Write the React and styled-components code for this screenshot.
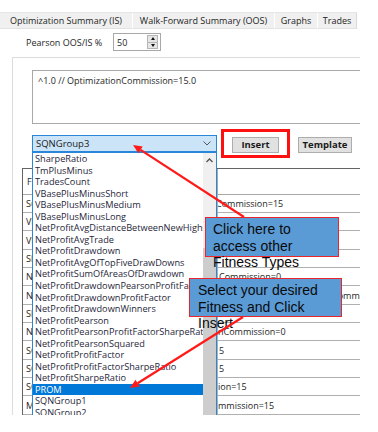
import React from "react";
import styled, { createGlobalStyle } from "styled-components";

const Global = createGlobalStyle`
  html, body { margin: 0; padding: 0; background: #ffffff; }
  body { font-family: "Open Sans", "Noto Sans", sans-serif; }
  * { box-sizing: border-box; }
`;

const Page = styled.div`
  width: 378px;
  height: 432px;
  background: #fff;
`;

const Frame = styled.div`
  position: relative;
  width: 360px;
  height: 415px;
  overflow: hidden;
  background: #fff;
  padding-top: 12px;
  font-size: 9px;
  color: #1a1a1a;
`;

const TabBar = styled.div`
  display: flex;
  height: 17px;
  width: 357px;
  background: #f0f0f0;
  border-top: 1px solid #e6e6e6;
`;

const Tab = styled.div`
  width: ${(p) => p.$w}px;
  height: 100%;
  display: flex;
  align-items: center;
  justify-content: center;
  border-right: 1px solid #ffffff;
  border-bottom: 1px solid #e2e2e2;
  font-size: 9px;
  color: #1e1e1e;
  white-space: nowrap;
  &:last-child { border-right: 1px solid #d9d9d9; }
`;

const PearsonRow = styled.div`
  display: flex;
  align-items: center;
  margin-top: 4px;
  padding-left: 26px;
  height: 18px;
`;

const Label = styled.span`
  width: 87px;
  font-size: 9px;
  color: #1e1e1e;
`;

const SpinBox = styled.div`
  width: 48px;
  height: 18px;
  border: 1px solid #a8a8a8;
  display: flex;
  align-items: center;
  padding: 0 2px 0 3px;
  background: #fff;
`;

const SpinValue = styled.span`
  flex: 1;
  font-size: 9px;
  color: #1e1e1e;
`;

const SpinButtons = styled.div`
  display: flex;
  flex-direction: column;
  width: 11px;
  height: 14px;
`;

const SpinBtn = styled.div`
  flex: 1;
  background: #e6e6e6;
  border: 1px solid #b5b5b5;
  display: flex;
  align-items: center;
  justify-content: center;
  &:first-child { border-bottom: none; }
`;

const Tri = styled.div`
  width: 0;
  height: 0;
  border-left: 2.5px solid transparent;
  border-right: 2.5px solid transparent;
  ${(p) => (p.$up ? "border-bottom: 3px solid #111;" : "border-top: 3px solid #111;")}
`;

const Group = styled.div`
  margin-top: 6px;
  margin-left: 12px;
  border-top: 1px solid #dcdcdc;
  border-left: 1px solid #dcdcdc;
  height: 400px;
`;

const Inner = styled.div`
  padding-left: 19px;
`;

const TextArea = styled.div`
  margin-top: 12px;
  width: 340px;
  height: 54px;
  border: 1px solid #a9a9a9;
  padding: 3px 5px;
  font-size: 9px;
  color: #1e1e1e;
  background: #fff;
`;

const ToolRow = styled.div`
  display: flex;
  align-items: center;
  margin-top: 5px;
  height: 29px;
`;

const ComboWrap = styled.div`
  position: relative;
  width: 185px;
  height: 17px;
`;

const Combo = styled.div`
  width: 100%;
  height: 100%;
  background: #cce4f7;
  border: 1px solid #2a86d8;
  display: flex;
  align-items: center;
  justify-content: space-between;
  padding: 0 5px 0 3px;
  font-size: 9.5px;
  color: #1a1a1a;
`;

const Chevron = styled.svg`
  width: 8px;
  height: 5px;
`;

const DropList = styled.div`
  position: absolute;
  top: 100%;
  left: 0;
  width: 185px;
  height: 270px;
  background: #fff;
  border: 1px solid #2a86d8;
  display: flex;
  z-index: 5;
`;

const Items = styled.div`
  flex: 1;
  overflow: hidden;
`;

const Item = styled.div`
  height: 11.55px;
  line-height: 11.55px;
  padding-left: 2px;
  font-size: 9.2px;
  white-space: nowrap;
  overflow: hidden;
  color: ${(p) => (p.$sel ? "#ffffff" : "#1f1f3a")};
  background: ${(p) => (p.$sel ? "#0078d7" : "transparent")};
`;

const ScrollBar = styled.div`
  width: 13px;
  display: flex;
  flex-direction: column;
  background: #f0f0f0;
`;

const ScrollArrow = styled.div`
  height: 14px;
  display: flex;
  align-items: center;
  justify-content: center;
`;

const ScrollGap = styled.div`
  height: 81px;
`;

const Thumb = styled.div`
  flex: 1;
  background: #cdcdcd;
`;

const Highlight = styled.div`
  margin-left: 4px;
  width: 69px;
  height: 29px;
  border: 3px solid #ff1010;
  display: flex;
  align-items: center;
  justify-content: center;
`;

const Button = styled.div`
  width: ${(p) => p.$w}px;
  height: 16px;
  margin-left: ${(p) => p.$ml || 0}px;
  margin-top: ${(p) => p.$mt || 0}px;
  background: #e1e1e1;
  border: 1px solid #adadad;
  display: flex;
  align-items: center;
  justify-content: center;
  font-size: 9.5px;
  font-weight: 700;
  color: #1a1a1a;
`;

const Table = styled.div`
  margin-top: 10px;
  margin-left: 9px;
  width: 338px;
  border-top: 1px solid #646464;
  border-left: 1px solid #646464;
  display: grid;
  grid-template-columns: 195px 1fr;
`;

const HeadCell = styled.div`
  height: 26px;
  border-bottom: 1px solid #a8a8a8;
  display: flex;
  align-items: center;
  padding-left: 4px;
  font-size: 9px;
  color: #1e1e1e;
  border-right: ${(p) => (p.$first ? "1px solid #a8a8a8" : "none")};
`;

const Cell = styled.div`
  height: ${(p) => p.$h}px;
  border-bottom: 1px solid #b0b0b0;
  display: flex;
  align-items: center;
  padding-left: ${(p) => (p.$first ? 3 : 0)}px;
  font-size: 9px;
  color: #1e1e1e;
  white-space: nowrap;
  overflow: hidden;
  border-right: ${(p) => (p.$first ? "1px solid #b0b0b0" : "none")};
`;

const CellText = styled.span`
  margin-left: ${(p) => p.$indent || 0}px;
`;

const Callout = styled.div`
  position: absolute;
  left: ${(p) => p.$left}px;
  top: ${(p) => p.$top}px;
  width: ${(p) => p.$w}px;
  height: ${(p) => p.$h}px;
  background: #5b9bd5;
  border: 1px solid #e8262c;
  padding: 3px 0 0 ${(p) => p.$pl}px;
  font-family: "Liberation Sans", Arial, sans-serif;
  font-size: 14px;
  line-height: 16.5px;
  color: #0a0a0a;
  z-index: 8;
`;

const Overlay = styled.svg`
  position: absolute;
  left: 0;
  top: 0;
  width: 360px;
  height: 415px;
  pointer-events: none;
  z-index: 10;
`;

const listItems = [
  "SharpeRatio",
  "TmPlusMinus",
  "TradesCount",
  "VBasePlusMinusShort",
  "VBasePlusMinusMedium",
  "VBasePlusMinusLong",
  "NetProfitAvgDistanceBetweenNewHighs",
  "NetProfitAvgTrade",
  "NetProfitDrawdown",
  "NetProfitAvgOfTopFiveDrawDowns",
  "NetProfitSumOfAreasOfDrawdown",
  "NetProfitDrawdownPearsonProfitFactor",
  "NetProfitDrawdownProfitFactor",
  "NetProfitDrawdownWinners",
  "NetProfitPearson",
  "NetProfitPearsonProfitFactorSharpeRatio",
  "NetProfitPearsonSquared",
  "NetProfitProfitFactor",
  "NetProfitProfitFactorSharpeRatio",
  "NetProfitSharpeRatio",
  "PROM",
  "SQNGroup1",
  "SQNGroup2",
  "SQNGroup3",
];

const rows = [
  { name: "SumOfAreasOfDrawdown", val: "Commission=15", indent: -2 },
  { name: "VBasePlusMinusShort", val: "" },
  { name: "VBasePlusMinusLong", val: "" },
  { name: "SharpeRatio", val: "" },
  { name: "NetProfitDrawdown", val: "Commission=0", indent: 1 },
  { name: "NetProfitPearson", val: "Commission=15", indent: 114 },
  { name: "SharpeRatio", val: "" },
  { name: "NetProfitSharpeRatio", val: "nCommission=0", indent: 0 },
  { name: "SQNGroup1", val: "5", indent: 1 },
  { name: "SQNGroup2", val: "5", indent: 1 },
  { name: "SQNGroup3", val: "ion=15", indent: 0 },
  { name: "MaxDrawdown", val: "mmission=15", indent: 0 },
];

function Arrow({ x1, y1, x2, y2 }) {
  const ang = Math.atan2(y2 - y1, x2 - x1);
  const len = 9;
  const wid = 4;
  const bx = x2 - len * Math.cos(ang);
  const by = y2 - len * Math.sin(ang);
  const px = -Math.sin(ang) * wid;
  const py = Math.cos(ang) * wid;
  return (
    <g>
      <line x1={x1} y1={y1} x2={bx} y2={by} stroke="#ff1a1a" strokeWidth="2.2" />
      <polygon
        points={`${x2},${y2} ${bx + px},${by + py} ${bx - px},${by - py}`}
        fill="#ff1a1a"
      />
    </g>
  );
}

export default function App() {
  return (
    <Page>
      <Global />
      <Frame>
        <TabBar>
          <Tab $w={133}>Optimization Summary (IS)</Tab>
          <Tab $w={142}>Walk-Forward Summary (OOS)</Tab>
          <Tab $w={43}>Graphs</Tab>
          <Tab $w={39}>Trades</Tab>
        </TabBar>
        <PearsonRow>
          <Label>Pearson OOS/IS %</Label>
          <SpinBox>
            <SpinValue>50</SpinValue>
            <SpinButtons>
              <SpinBtn><Tri $up /></SpinBtn>
              <SpinBtn><Tri /></SpinBtn>
            </SpinButtons>
          </SpinBox>
        </PearsonRow>
        <Group>
          <Inner>
            <TextArea>^1.0 // OptimizationCommission=15.0</TextArea>
            <ToolRow>
              <ComboWrap>
                <Combo>
                  <span>SQNGroup3</span>
                  <Chevron viewBox="0 0 8 5">
                    <polyline points="0.5,0.5 4,4 7.5,0.5" fill="none" stroke="#555" strokeWidth="1" />
                  </Chevron>
                </Combo>
                <DropList>
                  <Items>
                    {listItems.map((it) => (
                      <Item key={it} $sel={it === "PROM"}>{it}</Item>
                    ))}
                  </Items>
                  <ScrollBar>
                    <ScrollArrow>
                      <svg width="7" height="5" viewBox="0 0 7 5">
                        <polyline points="0.5,4 3.5,1 6.5,4" fill="none" stroke="#555" strokeWidth="1.3" />
                      </svg>
                    </ScrollArrow>
                    <ScrollGap />
                    <Thumb />
                  </ScrollBar>
                </DropList>
              </ComboWrap>
              <Highlight>
                <Button $w={47} $mt={2}>Insert</Button>
              </Highlight>
              <Button $w={54} $ml={8} $mt={2}>Template</Button>
            </ToolRow>
          </Inner>
          <Table>
            <HeadCell $first>Fitness</HeadCell>
            <HeadCell />
            {rows.map((r, i) => {
              const h = i % 3 === 2 ? 19 : 18;
              return (
                <React.Fragment key={i}>
                  <Cell $first $h={h}>{r.name}</Cell>
                  <Cell $h={h}>
                    <CellText $indent={r.indent}>{r.val}</CellText>
                  </Cell>
                </React.Fragment>
              );
            })}
          </Table>
        </Group>
        <Callout $left={205} $top={217} $w={134} $h={40} $pl={7}>
          Click here to<br />access other<br />Fitness Types
        </Callout>
        <Callout $left={189} $top={278} $w={153} $h={39} $pl={8}>
          Select your desired<br />Fitness and Click<br />Insert
        </Callout>
        <Overlay viewBox="0 0 360 415">
          <Arrow x1={244} y1={217} x2={133} y2={145} />
          <Arrow x1={243} y1={317} x2={130} y2={388} />
        </Overlay>
      </Frame>
    </Page>
  );
}
